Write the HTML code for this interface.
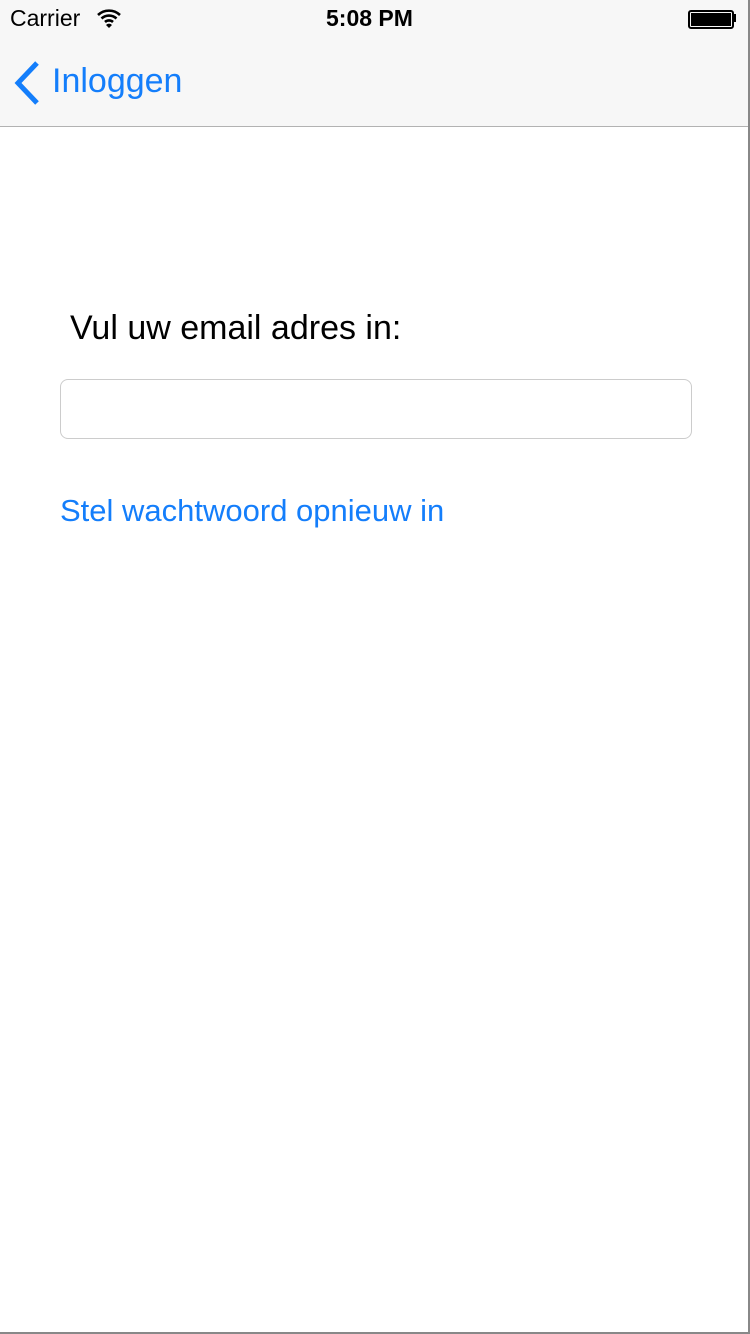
<!DOCTYPE html>
<html><head><meta charset="utf-8"><style>
body{margin:0;width:750px;height:1334px;position:relative;background:#fff;font-family:"Liberation Sans",sans-serif;overflow:hidden}
.nav{position:absolute;left:0;top:0;width:750px;height:126px;background:#f7f7f7;border-bottom:1px solid #b2b2b2}
.t{position:absolute;white-space:nowrap}
</style></head><body>
<div class="nav">
<div class="t" style="left:10px;top:5px;font-size:23px;color:#000">Carrier</div>
<svg style="position:absolute;left:96px;top:8px" width="26" height="20" viewBox="0 0 26 20"><path d="M2 7a16 16 0 0 1 22 0M5.5 10.5a11 11 0 0 1 15 0M9 14a6 6 0 0 1 8 0" stroke="#000" stroke-width="2.6" fill="none"/><path d="M10 17l3 3 3-3a4 4 0 0 0-6 0z" fill="#000"/></svg>
<div class="t" style="left:326px;top:5px;font-size:23px;font-weight:bold;color:#000">5:08 PM</div>
<div style="position:absolute;left:688px;top:10px;width:42px;height:15px;border:2px solid #000;border-radius:3px;box-sizing:content-box"><div style="margin:1px;height:13px;background:#000"></div></div>
<div style="position:absolute;left:733px;top:14px;width:3px;height:8px;background:#000"></div>
<svg style="position:absolute;left:12px;top:61px" width="30" height="44" viewBox="0 0 30 44"><path d="M25 2L6 22l19 20" stroke="#147efb" stroke-width="5" fill="none"/></svg>
<div class="t" style="left:52px;top:62px;font-size:34px;color:#147efb">Inloggen</div>
</div>
<div class="t" style="left:70px;top:309px;font-size:34px;color:#000">Vul uw email adres in:</div>
<div style="position:absolute;left:60px;top:379px;width:630px;height:58px;border:1px solid #ccc;border-radius:8px"></div>
<div class="t" style="left:60px;top:493px;font-size:31px;color:#147efb">Stel wachtwoord opnieuw in</div>
<div style="position:absolute;left:748px;top:0;width:2px;height:1334px;background:#888"></div>
<div style="position:absolute;left:0;top:1332px;width:750px;height:2px;background:#888"></div>
</body></html>
